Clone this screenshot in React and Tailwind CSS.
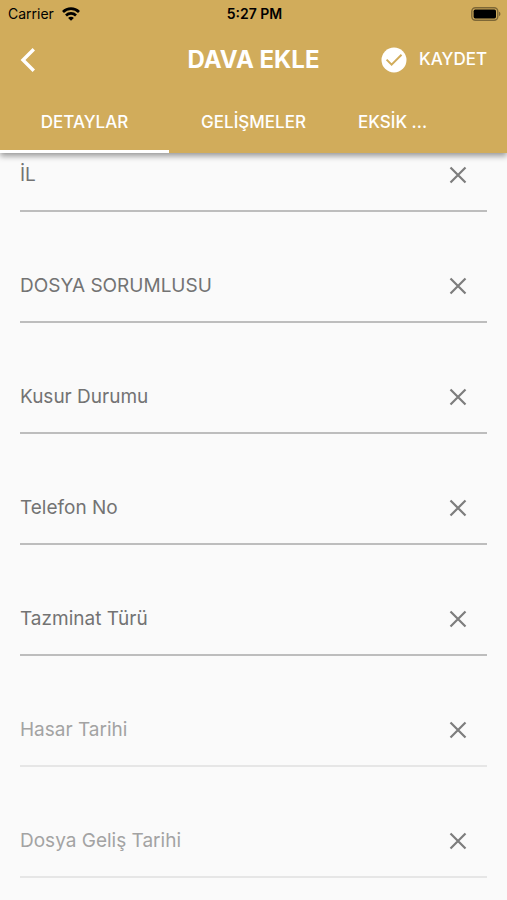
const fields = [
  { id: "il", label: "İL" },
  { id: "dosya-sorumlusu", label: "DOSYA SORUMLUSU" },
  { id: "kusur-durumu", label: "Kusur Durumu" },
  { id: "telefon-no", label: "Telefon No" },
  { id: "tazminat-turu", label: "Tazminat Türü" },
  { id: "hasar-tarihi", label: "Hasar Tarihi", disabled: true },
  { id: "dosya-gelis-tarihi", label: "Dosya Geliş Tarihi", disabled: true },
];

function WifiIcon() {
  return (
    <svg width="18" height="14" viewBox="0 0 18 14" fill="none" stroke="currentColor" strokeWidth="2.7" aria-hidden="true">
      <path d="M1 5a11.4 11.4 0 0 1 16 0" />
      <path d="M4 8.5a7.1 7.1 0 0 1 10 0" />
      <path d="M9 13.8 6.1 10.9a4 4 0 0 1 5.8 0Z" fill="currentColor" stroke="none" />
    </svg>
  );
}

function BatteryIcon() {
  return (
    <svg width="30" height="14" viewBox="0 0 30 14" aria-hidden="true">
      <rect x="0.8" y="0.8" width="26" height="12.4" rx="3.6" fill="none" stroke="#000" strokeOpacity="0.4" strokeWidth="1.4" />
      <rect x="2.6" y="2.6" width="22.4" height="8.8" rx="1.6" fill="#000" />
      <path d="M28 4.8c1.9.6 1.9 3.8 0 4.4Z" fill="#000" fillOpacity="0.4" />
    </svg>
  );
}

function BackIcon() {
  return (
    <svg width="16" height="26" viewBox="0 0 16 26" fill="none" stroke="currentColor" strokeWidth="3.4" aria-hidden="true">
      <path d="M13.8 2.2 3 13l10.8 10.8" />
    </svg>
  );
}

function CheckIcon() {
  return (
    <svg width="26" height="26" viewBox="0 0 26 26" aria-hidden="true">
      <circle cx="13" cy="13" r="12.5" fill="#fff" />
      <path d="m5.6 12.6 5 5 9.9-9.9" fill="none" stroke="#d1ac5b" strokeWidth="2" />
    </svg>
  );
}

function ClearIcon() {
  return (
    <svg width="18" height="18" viewBox="0 0 18 18" fill="none" stroke="currentColor" strokeWidth="2.2" aria-hidden="true">
      <path d="m1.5 1.5 15 15M16.5 1.5l-15 15" />
    </svg>
  );
}

function Field({ id, label, disabled }) {
  return (
    <div className={`border-b-2 pb-3.5 ${disabled ? "border-[#e6e6e6]" : "border-[#bdbdbd]"}`}>
      <div className="flex h-[42px] items-center">
        <div className="grid flex-1 items-center">
          <label
            htmlFor={id}
            className={`col-start-1 row-start-1 text-[19px] leading-6 ${disabled ? "text-[#a3a3a3]" : "text-[#737373]"}`}
          >
            {label}
          </label>
          <input
            id={id}
            type="text"
            disabled={disabled}
            className="col-start-1 row-start-1 h-10 w-full bg-transparent text-[19px] outline-none"
          />
        </div>
        <button type="button" aria-label={`${label} temizle`} className="flex h-10 w-[58px] items-center justify-center text-[#7d7d7d]">
          <ClearIcon />
        </button>
      </div>
    </div>
  );
}

export default function App() {
  return (
    <div className="min-h-screen bg-[#fafafa] font-['Inter','Liberation_Sans',sans-serif]">
      <header className="sticky top-0 z-10 bg-[#d1ac5b] shadow-[0_3px_6px_rgba(0,0,0,0.4)]">
        <div className="grid h-7 grid-cols-[1fr_auto_1fr] items-center pr-1.5 pl-2 text-sm text-black">
          <div className="flex items-center gap-2">
            <span>Carrier</span>
            <WifiIcon />
          </div>
          <span className="text-center font-semibold">5:27 PM</span>
          <div className="flex justify-end">
            <BatteryIcon />
          </div>
        </div>
        <div className="grid h-16 grid-cols-[1fr_auto_1fr] items-center px-5 text-white">
          <button type="button" aria-label="Geri" className="justify-self-start">
            <BackIcon />
          </button>
          <h1 className="text-2xl font-bold">DAVA EKLE</h1>
          <button type="button" className="flex items-center gap-3 justify-self-end text-[17px] font-medium">
            <CheckIcon />
            KAYDET
          </button>
        </div>
        <nav className="grid h-[61px] grid-cols-3 text-[17px] font-medium text-white">
          <button type="button" className="border-b-3 border-white pt-[3px]">DETAYLAR</button>
          <button type="button" className="border-b-3 border-transparent pt-[3px]">GELİŞMELER</button>
          <button type="button" className="border-b-3 border-transparent px-5 pt-[3px] text-left">EKSİK ...</button>
        </nav>
      </header>
      <main className="flex flex-col gap-[53px] px-5 pt-px">
        {fields.map((field) => (
          <Field key={field.id} {...field} />
        ))}
      </main>
    </div>
  );
}
